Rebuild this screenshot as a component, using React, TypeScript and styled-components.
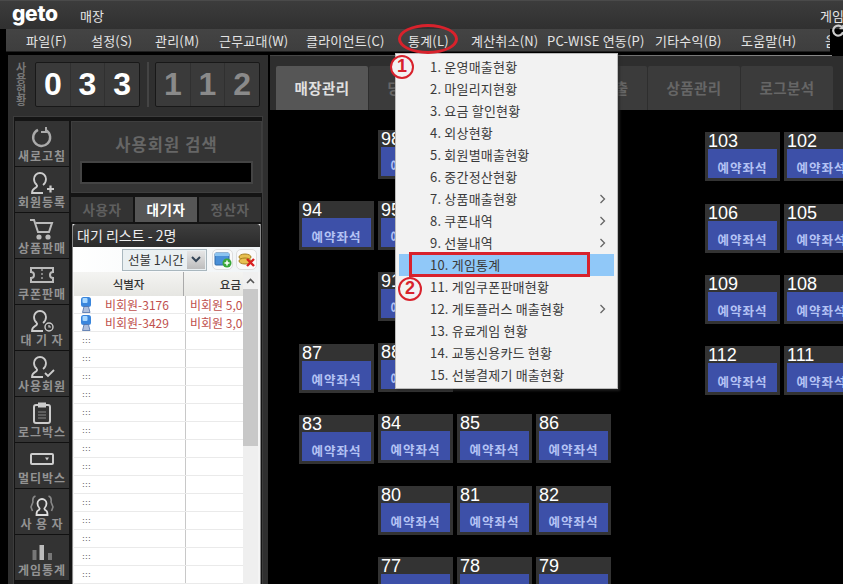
import { ReactNode } from 'react'
import styled, { createGlobalStyle } from 'styled-components'

const KR = `"Noto Sans CJK KR", "Liberation Sans", sans-serif`

const GlobalStyle = createGlobalStyle`
  html, body {
    margin: 0;
    background: #000;
    font-family: ${KR};
  }
  * {
    box-sizing: border-box;
  }
`

const Page = styled.div`
  position: relative;
  width: 843px;
  height: 584px;
  overflow: hidden;
  background: #000;
  display: flex;
  flex-direction: column;
`

const TitleBar = styled.header`
  height: 29px;
  flex: none;
  display: flex;
  align-items: center;
  padding-left: 12px;
  background: linear-gradient(#3c3c3c, #303030);
  border-top: 1px solid #4a4a4a;
  color: #e6e6e6;
`

const Logo = styled.span`
  font-family: Inter, 'Liberation Sans', sans-serif;
  font-weight: 800;
  font-size: 21px;
  line-height: 24px;
  letter-spacing: -0.3px;
  color: #fff;
  width: 68px;
  margin-top: -3px;
`

const TitleText = styled.span`
  font-size: 13px;
`

const TitleRight = styled.span`
  margin-left: auto;
  width: 23px;
  font-size: 13px;
  white-space: nowrap;
  overflow: hidden;
`

const MenuBar = styled.nav`
  flex: none;
  height: 25px;
  margin: 0 13px 0 6px;
  padding-left: 20px;
  display: grid;
  grid-template-columns: 65px 64px 64px 87px 102px 63px 76px 108px 86px 84px 6px;
  align-items: center;
  overflow: hidden;
  background: linear-gradient(#444 0, #3e3e3e 22px, #000 23px);
  color: #e4e4e4;
  font-size: 13px;
  letter-spacing: 0.2px;
  line-height: 22px;
`

const MenuLabel = styled.span`
  white-space: nowrap;
  height: 23px;
`

const Body = styled.div`
  flex: 1;
  min-height: 0;
  display: flex;
  padding-left: 8px;
  margin-top: 1px;
`

const LeftPanel = styled.aside`
  width: 260px;
  flex: none;
  background: #2f2f2f;
  padding: 6px 5px 0;
  display: flex;
  flex-direction: column;
  gap: 9px;
`

const CounterRow = styled.div`
  height: 46px;
  flex: none;
  display: flex;
  align-items: center;
  padding-left: 3px;
`

const CounterLabel = styled.div`
  width: 19px;
  font-size: 11px;
  line-height: 11px;
  font-weight: 700;
  color: #777;
  text-align: left;
`

const CounterGroup = styled.div`
  width: 105px;
  height: 45px;
  display: flex;
  background: #3a3a3a;
  border: 1px solid #181818;
  border-radius: 2px;
`

const CounterDigit = styled.span<{ $lit?: boolean }>`
  flex: 1;
  text-align: center;
  font-family: 'Liberation Sans', sans-serif;
  font-weight: 700;
  font-size: 32px;
  line-height: 43px;
  color: ${({ $lit }) => ($lit ? '#fff' : '#8a8a8a')};
  & + & {
    border-left: 1px solid #303030;
  }
`

const CounterDivider = styled.div`
  width: 2px;
  height: 45px;
  margin: 0 6px 0 7px;
  background: #444;
`

const LeftInner = styled.div`
  flex: 1;
  min-height: 0;
  display: flex;
  gap: 2px;
  padding: 4px 1px 0;
  background: #141414;
  border: 1px solid #3c3c3c;
  border-bottom: 0;
`

const SideNav = styled.div`
  width: 54px;
  flex: none;
  display: flex;
  flex-direction: column;
`

const SideTile = styled.div`
  height: 46px;
  flex: none;
  padding-top: 4px;
  background: #333;
  border-bottom: 1px solid #111;
  display: flex;
  flex-direction: column;
  align-items: center;
  color: #aaa;
  svg {
    width: 26px;
    height: 24px;
    display: block;
  }
`

const SideLabel = styled.span`
  font-size: 12px;
  line-height: 14px;
  font-weight: 700;
  color: #939393;
  white-space: pre;
  letter-spacing: 0.9px;
`

const ContentColumn = styled.div`
  width: 191px;
  flex: none;
  display: flex;
  flex-direction: column;
`

const SearchPanel = styled.div`
  height: 72px;
  flex: none;
  padding-top: 11px;
  background: #343434;
  border: 1px solid #3e3e3e;
  display: flex;
  flex-direction: column;
  align-items: center;
`

const SearchTitle = styled.div`
  font-size: 16.5px;
  line-height: 22px;
  font-weight: 700;
  letter-spacing: 1.1px;
  color: #666;
`

const SearchInput = styled.div`
  width: 173px;
  height: 23px;
  margin-top: 6px;
  background: #000;
  border: 2px solid #444;
`

const TabRow = styled.div`
  height: 25px;
  flex: none;
  margin-top: 4px;
  display: flex;
  gap: 2px;
`

const SideTab = styled.div<{ $active?: boolean }>`
  width: 62px;
  text-align: center;
  font-size: 13.5px;
  line-height: 25px;
  font-weight: 700;
  letter-spacing: 0.5px;
  color: ${({ $active }) => ($active ? '#fff' : '#5f5f5f')};
  background: ${({ $active }) => ($active ? '#565656' : '#333')};
`

const ListPanel = styled.div`
  flex: 1;
  min-height: 0;
  margin: 2px 0 0 1px;
  width: 189px;
  overflow: hidden;
  display: flex;
  flex-direction: column;
  background: #f4f4f4;
  border-left: 1px solid #888;
  border-right: 1px solid #888;
`

const ListTitle = styled.div`
  height: 23px;
  flex: none;
  padding-left: 4px;
  border-radius: 3px 3px 0 0;
  background: linear-gradient(#3e3e3e, #2b2b2b);
  color: #eee;
  font-size: 14px;
  line-height: 23px;
  white-space: nowrap;
`

const ListToolbar = styled.div`
  height: 25px;
  flex: none;
  padding-right: 3px;
  display: flex;
  align-items: center;
  justify-content: flex-end;
  gap: 3px;
  background: linear-gradient(90deg, #fff, #f0f4f6);
`

const SelectBox = styled.div`
  width: 85px;
  height: 22px;
  margin-right: 2px;
  padding-left: 5px;
  display: flex;
  align-items: center;
  justify-content: space-between;
  background: #eaf0f2;
  border: 1px solid #a9b7be;
  color: #333;
  font-size: 12.5px;
  white-space: nowrap;
`

const SelectArrow = styled.span`
  width: 18px;
  height: 18px;
  margin-right: 1px;
  display: flex;
  align-items: center;
  justify-content: center;
  background: linear-gradient(#e6e6e6, #bdbdbd);
  svg {
    display: block;
  }
`

const ToolButton = styled.div`
  width: 21px;
  height: 21px;
  display: flex;
  align-items: center;
  justify-content: center;
  background: #fafafa;
  border: 1px solid #ddd;
  border-radius: 5px;
`

const TableArea = styled.div`
  flex: 1;
  min-height: 0;
  margin: 0 2px 0 1px;
  display: flex;
`

const TableMain = styled.div`
  flex: 1;
  min-width: 0;
  display: flex;
  flex-direction: column;
`

const TableHead = styled.div`
  height: 24px;
  flex: none;
  display: grid;
  grid-template-columns: 109px 1fr;
  background: linear-gradient(#f4f4f2, #e6e6e2);
  font-size: 11.5px;
  line-height: 24px;
  font-weight: 500;
  color: #333;
`

const HeadCell = styled.div<{ $right?: boolean }>`
  text-align: ${({ $right }) => ($right ? 'right' : 'center')};
  padding-right: ${({ $right }) => ($right ? '2px' : '0')};
  border-left: ${({ $right }) => ($right ? '1px solid #aaa' : '0')};
`

const Row = styled.div`
  height: 18px;
  flex: none;
  display: grid;
  grid-template-columns: 111px 1fr;
  background: #fff;
  border-bottom: 1px solid #eaeaea;
  overflow: hidden;
`

const Cell = styled.div`
  display: flex;
  align-items: center;
  overflow: hidden;
  white-space: nowrap;
  font-size: 12px;
  color: #c0504d;
  & + & {
    border-left: 1px solid #c8c8c8;
    padding-left: 4px;
  }
`

const RowIcon = styled.svg`
  width: 12px;
  height: 16px;
  margin: 0 13px 0 6px;
  flex: none;
`

const RowDots = styled.span`
  margin-left: 7px;
  font-family: 'Liberation Mono', monospace;
  font-size: 8px;
  letter-spacing: -1.8px;
  color: #666;
`

const ScrollTrack = styled.div`
  width: 15px;
  flex: none;
  position: relative;
  background: #efefef;
`

const ScrollUp = styled.div`
  height: 17px;
  display: flex;
  align-items: center;
  justify-content: center;
  background: #f0f0f0;
`

const ScrollThumb = styled.div`
  height: 157px;
  background: #c8c8c8;
`

const MapPanel = styled.main`
  position: relative;
  flex: 1;
  margin-left: 2px;
  min-width: 0;
`

const TopRule = styled.div`
  width: 562px;
  height: 1px;
  background: linear-gradient(90deg, #444, #8a8a8a);
`

const MapTabs = styled.div`
  height: 54px;
  padding: 10px 0 0 6px;
  display: flex;
  gap: 1px;
  background: #2e2e2e;
`

const MapTab = styled.div<{ $active?: boolean }>`
  width: 92px;
  text-align: center;
  font-size: 14.5px;
  line-height: 44px;
  font-weight: 700;
  letter-spacing: 0.4px;
  white-space: nowrap;
  overflow: hidden;
  border-radius: 2px 2px 0 0;
  color: ${({ $active }) => ($active ? '#e0e0e0' : '#666')};
  background: ${({ $active }) => ($active ? '#565656' : '#3b3b3b')};
`

const SeatMap = styled.div`
  position: relative;
  height: 474px;
  background: #000;
`

const SeatBox = styled.div`
  position: absolute;
  width: 75px;
  height: 49px;
  padding: 0 3px 3px;
  display: flex;
  flex-direction: column;
  background: #333;
`

const SeatNumber = styled.div`
  height: 17px;
  font-family: 'Liberation Sans', sans-serif;
  font-size: 18px;
  line-height: 19px;
  color: #fff;
`

const SeatState = styled.div`
  flex: 1;
  min-height: 0;
  text-align: center;
  background: #3d50a8;
  color: #b4c2f4;
  font-size: 12.5px;
  font-weight: 700;
  line-height: 38px;
  letter-spacing: 1px;
  height: 29px;
  overflow: hidden;
`

const DropMenu = styled.ul`
  position: absolute;
  left: 395px;
  top: 53px;
  width: 223px;
  height: 336px;
  margin: 0;
  padding: 2px 3px;
  list-style: none;
  background: #f2f2f2;
  border: 1px solid #bbb;
  box-shadow: 2px 2px 2px rgba(40, 40, 40, 0.7);
`

const DropItem = styled.li<{ $active?: boolean }>`
  position: relative;
  height: 22px;
  padding-left: 31px;
  font-size: 13px;
  letter-spacing: 0.2px;
  line-height: 21px;
  color: #3a3a3a;
  white-space: nowrap;
  background: ${({ $active }) => ($active ? '#90c8f8' : 'transparent')};
`

const SubArrow = styled.svg`
  position: absolute;
  right: 8px;
  top: 6px;
  width: 7px;
  height: 10px;
`

const RedEllipse = styled.div`
  position: absolute;
  left: 398px;
  top: 24px;
  width: 60px;
  height: 30px;
  border: 3px solid #d8222c;
  border-radius: 50%;
`

const RedBox = styled.div`
  position: absolute;
  left: 409px;
  top: 252px;
  width: 181px;
  height: 25px;
  border: 3px solid #d8222c;
`

const StepBadge = styled.div<{ $x: number; $y: number }>`
  position: absolute;
  left: ${({ $x }) => $x}px;
  top: ${({ $y }) => $y}px;
  width: 24px;
  height: 24px;
  border: 2.5px solid #d8222c;
  border-radius: 50%;
  background: #f2f2f2;
  color: #d8222c;
  font-family: 'Liberation Sans', sans-serif;
  font-weight: 700;
  font-size: 18px;
  line-height: 19px;
  text-align: center;
`

const CornerRefresh = styled.svg`
  position: absolute;
  left: 832px;
  top: 24px;
  width: 13px;
  height: 13px;
`

const menus = ['파일(F)', '설정(S)', '관리(M)', '근무교대(W)', '클라이언트(C)', '통계(L)', '계산취소(N)', 'PC-WISE 연동(P)', '기타수익(B)', '도움말(H)', '음']

const userPath = 'M8 14c-2-1.400-3-3.600-3-6a6 6 0 0 1 12 0c0 2.400-1 4.600-3 6M8 14c.4 1.400-.3 2.200-1.700 2.900C4.300 18 3 19 3 22h11'

const sideItems: { label: string; icon: ReactNode }[] = [
  {
    label: '새로고침',
    icon: (
      <svg viewBox="0 0 26 24" fill="none" stroke="#aaa" strokeWidth="2.400">
        <path d="M17.500 5.500A8.500 8.500 0 1 1 9 4.800" />
        <path d="M17 2v5h-5" strokeWidth="2" />
      </svg>
    ),
  },
  {
    label: '회원등록',
    icon: (
      <svg viewBox="0 0 26 24" fill="none" stroke="#ccc" strokeWidth="1.800">
        <path d={userPath} />
        <path d="M18 18h7M21.500 14.500v7" strokeWidth="2.200" />
      </svg>
    ),
  },
  {
    label: '상품판매',
    icon: (
      <svg viewBox="0 0 26 24" fill="none" stroke="#bbb" strokeWidth="2">
        <path d="M1 3h4l4 12h11l3-9H7" />
        <circle cx="10" cy="20" r="1.600" fill="#bbb" />
        <circle cx="19" cy="20" r="1.600" fill="#bbb" />
      </svg>
    ),
  },
  {
    label: '쿠폰판매',
    icon: (
      <svg viewBox="0 0 26 24" fill="none" stroke="#bbb" strokeWidth="2">
        <path d="M2 5h22v4a3 3 0 0 0 0 6v4H2v-4a3 3 0 0 0 0-6z" />
        <path d="M13 6v12" strokeDasharray="2 2" strokeWidth="1.200" />
      </svg>
    ),
  },
  {
    label: '대 기 자',
    icon: (
      <svg viewBox="0 0 26 24" fill="none" stroke="#ccc" strokeWidth="1.800">
        <path d={userPath} />
        <circle cx="20" cy="18" r="4" strokeWidth="1.400" />
        <path d="M20 16v2h2" strokeWidth="1.200" />
      </svg>
    ),
  },
  {
    label: '사용회원',
    icon: (
      <svg viewBox="0 0 26 24" fill="none" stroke="#ccc" strokeWidth="1.800">
        <path d={userPath} />
        <path d="M16 18l3 3 6-6" strokeWidth="1.800" />
      </svg>
    ),
  },
  {
    label: '로그박스',
    icon: (
      <svg viewBox="0 0 26 24" fill="none" stroke="#ccc" strokeWidth="2">
        <rect x="5" y="4" width="16" height="18" rx="2" />
        <rect x="9.500" y="2" width="7" height="4" fill="#ccc" strokeWidth="1" />
        <path d="M9 11h8M9 14h8M9 17h8" strokeWidth="1" stroke="#888" />
      </svg>
    ),
  },
  {
    label: '멀티박스',
    icon: (
      <svg viewBox="0 0 26 24" fill="none" stroke="#ccc" strokeWidth="2">
        <rect x="2" y="7" width="22" height="10" rx="1" />
        <path d="M16 10.500h4l-2 3z" fill="#ccc" stroke="none" />
      </svg>
    ),
  },
  {
    label: '사 용 자',
    icon: (
      <svg viewBox="0 0 26 24" fill="none" stroke="#ddd" strokeWidth="1.800">
        <path d="M10.500 15c-1.500-1.200-2-3-2-4.500a4.500 4.500 0 0 1 9 0c0 1.500-.5 3.300-2 4.500M10.500 15c.3 1.300-.3 2-1.500 2.500-1.200.6-1.500 2-1.500 4.500h11c0-2.500-.3-3.900-1.500-4.500-1.200-.5-1.800-1.200-1.500-2.500" />
        <path d="M6.500 3C4 4 3.500 6.500 4 9l-2 5 1.500 4M19.500 3c2.500 1 3 3.500 2.500 6l2 5-1.500 4" stroke="#888" strokeWidth="1.600" />
      </svg>
    ),
  },
  {
    label: '게임통계',
    icon: (
      <svg viewBox="0 0 26 24" fill="#777" stroke="none">
        <rect x="3.500" y="11" width="4" height="10" />
        <rect x="10.500" y="6" width="4.500" height="15" fill="#bbb" />
        <rect x="19" y="14" width="4" height="7" />
      </svg>
    ),
  },
]

const seats: { no: number; x: number; y: number }[] = [
  { no: 98, x: 378, y: 130 },
  { no: 103, x: 705, y: 132 },
  { no: 102, x: 784, y: 132 },
  { no: 94, x: 299, y: 201 },
  { no: 95, x: 378, y: 201 },
  { no: 106, x: 705, y: 204 },
  { no: 105, x: 784, y: 204 },
  { no: 91, x: 378, y: 272 },
  { no: 109, x: 705, y: 275 },
  { no: 108, x: 784, y: 275 },
  { no: 87, x: 299, y: 344 },
  { no: 88, x: 378, y: 343 },
  { no: 112, x: 705, y: 346 },
  { no: 111, x: 784, y: 346 },
  { no: 83, x: 299, y: 415 },
  { no: 84, x: 378, y: 414 },
  { no: 85, x: 457, y: 414 },
  { no: 86, x: 536, y: 414 },
  { no: 80, x: 378, y: 486 },
  { no: 81, x: 457, y: 486 },
  { no: 82, x: 536, y: 486 },
  { no: 77, x: 378, y: 557 },
  { no: 78, x: 457, y: 557 },
  { no: 79, x: 536, y: 557 },
]

const dropItems = [
  { label: '1. 운영매출현황' },
  { label: '2. 마일리지현황' },
  { label: '3. 요금 할인현황' },
  { label: '4. 외상현황' },
  { label: '5. 회원별매출현황' },
  { label: '6. 중간정산현황' },
  { label: '7. 상품매출현황', sub: true },
  { label: '8. 쿠폰내역', sub: true },
  { label: '9. 선불내역', sub: true },
  { label: '10. 게임통계', active: true },
  { label: '11. 게임쿠폰판매현황' },
  { label: '12. 게토플러스 매출현황', sub: true },
  { label: '13. 유료게임 현황' },
  { label: '14. 교통신용카드 현황' },
  { label: '15. 선불결제기 매출현황' },
]

const PcIcon = () => (
  <RowIcon viewBox="0 0 12 16">
    <rect x="1" y="0" width="10" height="10" rx="2.500" fill="#3a86dc" />
    <rect x="2.500" y="1" width="5" height="5" rx="1" fill="#a8d8ff" />
    <path d="M2.500 15.500l1.500-6h4.500l1.500 6z" fill="#aebfdc" stroke="#4b6ea8" strokeWidth="0.800" />
  </RowIcon>
)

const waitRows = [
  { id: '비회원-3176', fee: '비회원 5,000원' },
  { id: '비회원-3429', fee: '비회원 3,000원' },
]

export default function App() {
  return (
    <Page>
      <GlobalStyle />
      <TitleBar>
        <Logo>geto</Logo>
        <TitleText>매장</TitleText>
        <TitleRight>게임</TitleRight>
      </TitleBar>
      <MenuBar>
        {menus.map((m) => (
          <MenuLabel key={m}>{m}</MenuLabel>
        ))}
      </MenuBar>
      <Body>
        <LeftPanel>
          <CounterRow>
            <CounterLabel>
              사<br />용<br />현<br />황
            </CounterLabel>
            <CounterGroup>
              <CounterDigit $lit>0</CounterDigit>
              <CounterDigit $lit>3</CounterDigit>
              <CounterDigit $lit>3</CounterDigit>
            </CounterGroup>
            <CounterDivider />
            <CounterGroup>
              <CounterDigit>1</CounterDigit>
              <CounterDigit>1</CounterDigit>
              <CounterDigit>2</CounterDigit>
            </CounterGroup>
          </CounterRow>
          <LeftInner>
            <SideNav>
              {sideItems.map((s) => (
                <SideTile key={s.label}>
                  {s.icon}
                  <SideLabel>{s.label}</SideLabel>
                </SideTile>
              ))}
            </SideNav>
            <ContentColumn>
              <SearchPanel>
                <SearchTitle>사용회원 검색</SearchTitle>
                <SearchInput />
              </SearchPanel>
              <TabRow>
                <SideTab>사용자</SideTab>
                <SideTab $active>대기자</SideTab>
                <SideTab>정산자</SideTab>
              </TabRow>
              <ListPanel>
                <ListTitle>대기 리스트 - 2명</ListTitle>
                <ListToolbar>
                  <SelectBox>
                    선불 1시간
                    <SelectArrow>
                      <svg width="10" height="7" viewBox="0 0 10 7" fill="none" stroke="#345" strokeWidth="2">
                        <path d="M1 1l4 4 4-4" />
                      </svg>
                    </SelectArrow>
                  </SelectBox>
                  <ToolButton>
                    <svg width="18" height="16" viewBox="0 0 18 16">
                      <rect x="1" y="1" width="14" height="12" rx="1" fill="#4a90d8" stroke="#2f6aa8" />
                      <rect x="1" y="1" width="14" height="3" fill="#8cc4f0" />
                      <circle cx="13" cy="11" r="4.500" fill="#3aa83a" />
                      <path d="M10.500 11h5M13 8.500v5" stroke="#fff" strokeWidth="1.500" />
                    </svg>
                  </ToolButton>
                  <ToolButton>
                    <svg width="18" height="16" viewBox="0 0 18 16">
                      <ellipse cx="7" cy="5" rx="6" ry="3" fill="#e8c050" stroke="#a88020" />
                      <ellipse cx="7" cy="9" rx="6" ry="3" fill="#e8c050" stroke="#a88020" />
                      <path d="M9 7l7 7M16 7l-7 7" stroke="#d82020" strokeWidth="2.400" />
                    </svg>
                  </ToolButton>
                </ListToolbar>
                <TableArea>
                  <TableMain>
                    <TableHead>
                      <HeadCell>식별자</HeadCell>
                      <HeadCell $right>요금</HeadCell>
                    </TableHead>
                    {waitRows.map((r) => (
                      <Row key={r.id}>
                        <Cell>
                          <PcIcon />
                          {r.id}
                        </Cell>
                        <Cell>{r.fee}</Cell>
                      </Row>
                    ))}
                    {Array.from({ length: 15 }, (_, i) => (
                      <Row key={i}>
                        <Cell>
                          <RowDots>:::</RowDots>
                        </Cell>
                        <Cell />
                      </Row>
                    ))}
                  </TableMain>
                  <ScrollTrack>
                    <ScrollUp>
                      <svg width="9" height="6" viewBox="0 0 9 6" fill="none" stroke="#555" strokeWidth="1.600">
                        <path d="M1 5l3.500-3.500L8 5" />
                      </svg>
                    </ScrollUp>
                    <ScrollThumb />
                  </ScrollTrack>
                </TableArea>
              </ListPanel>
            </ContentColumn>
          </LeftInner>
        </LeftPanel>
        <MapPanel>
          <TopRule />
          <MapTabs>
            <MapTab $active>매장관리</MapTab>
            <MapTab>당일매출</MapTab>
            <MapTab />
            <MapTab>상품매출</MapTab>
            <MapTab>상품관리</MapTab>
            <MapTab>로그분석</MapTab>
          </MapTabs>
          <SeatMap>
            {seats.map((s) => (
              <SeatBox key={s.no} style={{ left: s.x - 270, top: s.y - 110 }}>
                <SeatNumber>{s.no}</SeatNumber>
                <SeatState>예약좌석</SeatState>
              </SeatBox>
            ))}
          </SeatMap>
        </MapPanel>
      </Body>
      <DropMenu>
        {dropItems.map((d) => (
          <DropItem key={d.label} $active={d.active}>
            {d.label}
            {d.sub && (
              <SubArrow viewBox="0 0 7 10" fill="none" stroke="#666" strokeWidth="1.300">
                <path d="M1.500 1l4 4-4 4" />
              </SubArrow>
            )}
          </DropItem>
        ))}
      </DropMenu>
      <RedEllipse />
      <RedBox />
      <StepBadge $x={390} $y={55}>1</StepBadge>
      <StepBadge $x={398} $y={277}>2</StepBadge>
      <CornerRefresh viewBox="0 0 13 13" fill="none" stroke="#ccc" strokeWidth="2.200">
        <path d="M10.500 4A5 5 0 1 0 11 8" />
        <path d="M11 1v3.500H7.500" strokeWidth="1.600" />
      </CornerRefresh>
    </Page>
  )
}
